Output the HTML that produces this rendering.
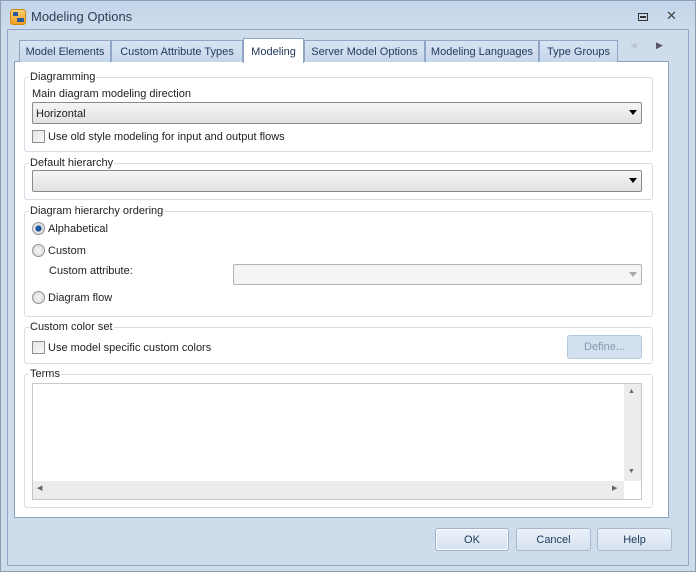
<!DOCTYPE html>
<html><head><style>
*{box-sizing:border-box;margin:0;padding:0}
body{width:696px;height:572px;position:relative;overflow:hidden;background:#cfdcec;font-family:"Liberation Sans",sans-serif;font-size:11px;color:#1e1e1e}
.a{position:absolute}
.win{left:0;top:0;width:696px;height:572px;border:1px solid #8f9cae;background:linear-gradient(#c3d5ea 0,#cfdcec 30px)}
.frame{left:7px;top:29px;width:682px;height:537px;border:1px solid #8fa6c4;background:#cfdcec}
.tab{top:40px;height:22px;border:1px solid #8fa6c4;border-bottom:none;background:linear-gradient(#d8e4f2,#c6d6ea);text-align:center;line-height:20px;color:#1e395b;padding-top:1px}
.tab.on{top:38px;height:25px;background:#fff;z-index:3;line-height:24px}
.panel{left:14px;top:61px;width:655px;height:457px;background:#fff;border:1px solid #8da2c0}
.grp{left:24px;width:629px;border:1px solid #d6dee8;border-radius:3px}
.lg{background:#fff;padding:0 1px;left:29px}
.combo{border:1px solid #8a8a8a;border-radius:2px;background:linear-gradient(#f6f6f6,#e2e2e2)}
.arr{position:absolute;right:4px;top:7px;width:0;height:0;border-left:4px solid transparent;border-right:4px solid transparent;border-top:5px solid #000}
.cb{width:13px;height:13px;border:1px solid #8e8f8f;background:linear-gradient(135deg,#e4e4e4,#fafafa)}
.rd{width:13px;height:13px;border-radius:50%;border:1px solid #939393;background:radial-gradient(#f4f4f4,#d8d8d8)}
.btn{top:528px;height:23px;border:1px solid #a8b8cc;border-radius:3px;background:linear-gradient(#eaf1fa,#d6e2f0);text-align:center;line-height:22px;color:#1e395b}
.t{margin-top:1px}
</style></head><body>
<div class="a win"></div>
<div class="a" style="left:10px;top:9px;width:16px;height:16px;border-radius:3px;background:linear-gradient(#ffd070,#f0a020);border:1px solid #d08a10"></div>
<div class="a" style="left:13px;top:12px;width:5px;height:4px;background:#2a5a9a"></div>
<div class="a" style="left:17px;top:18px;width:7px;height:4px;background:#2a5a9a"></div>
<div class="a" style="left:31px;top:9px;font-size:13px;color:#2c3e56">Modeling Options</div>
<div class="a" style="left:638px;top:13px;width:10px;height:8px;border:1px solid #333"></div>
<div class="a" style="left:640px;top:16px;width:6px;height:2px;background:#333"></div>
<div class="a" style="left:666px;top:8px;font-size:13px;color:#444">✕</div>
<div class="a frame"></div>
<div class="a panel"></div>
<div class="a tab" style="left:19px;width:92px">Model Elements</div>
<div class="a tab" style="left:111px;width:132px">Custom Attribute Types</div>
<div class="a tab on" style="left:243px;width:61px">Modeling</div>
<div class="a tab" style="left:304px;width:121px">Server Model Options</div>
<div class="a tab" style="left:425px;width:114px">Modeling Languages</div>
<div class="a tab" style="left:539px;width:79px">Type Groups</div>
<div class="a" style="left:630px;top:40px;color:#c0c8d4;font-size:9px">◀</div>
<div class="a" style="left:656px;top:40px;color:#556;font-size:9px">▶</div>

<div class="a grp" style="top:77px;height:75px"></div>
<div class="a lg" style="top:71px">Diagramming</div>
<div class="a" style="left:32px;top:88px">Main diagram modeling direction</div>
<div class="a combo" style="left:32px;top:102px;width:610px;height:22px"><span style="position:absolute;left:3px;top:5px">Horizontal</span><div class="arr"></div></div>
<div class="a cb" style="left:32px;top:130px"></div>
<div class="a" style="left:48px;top:131px">Use old style modeling for input and output flows</div>

<div class="a grp" style="top:163px;height:37px"></div>
<div class="a lg" style="top:157px">Default hierarchy</div>
<div class="a combo" style="left:32px;top:170px;width:610px;height:22px"><div class="arr"></div></div>

<div class="a grp" style="top:211px;height:106px"></div>
<div class="a lg" style="top:205px">Diagram hierarchy ordering</div>
<div class="a rd" style="left:32px;top:222px;background:radial-gradient(#1b6fc0 0,#0b4a90 2.5px,#e6e6e6 3.5px,#d6d6d6)"></div>
<div class="a" style="left:48px;top:223px">Alphabetical</div>
<div class="a rd" style="left:32px;top:244px"></div>
<div class="a" style="left:48px;top:245px">Custom</div>
<div class="a" style="left:49px;top:265px">Custom attribute:</div>
<div class="a" style="left:233px;top:264px;width:409px;height:21px;border:1px solid #b4b4b4;border-radius:2px;background:#f4f4f4"><div class="arr" style="border-top-color:#aaa"></div></div>
<div class="a rd" style="left:32px;top:291px"></div>
<div class="a" style="left:48px;top:292px">Diagram flow</div>

<div class="a grp" style="top:327px;height:37px"></div>
<div class="a lg" style="top:321px">Custom color set</div>
<div class="a cb" style="left:32px;top:341px"></div>
<div class="a" style="left:48px;top:342px">Use model specific custom colors</div>
<div class="a" style="left:567px;top:335px;width:75px;height:24px;border:1px solid #b8c8dc;border-radius:3px;background:#d2e0f0;color:#8a98aa;text-align:center;line-height:23px">Define...</div>

<div class="a grp" style="top:374px;height:134px"></div>
<div class="a lg" style="top:368px">Terms</div>
<div class="a" style="left:32px;top:383px;width:610px;height:117px;border:1px solid #c8c8c8;background:#fff"></div>
<div class="a" style="left:624px;top:384px;width:17px;height:97px;background:#ececec"></div>
<div class="a" style="left:628px;top:388px;font-size:7px;color:#666">▲</div>
<div class="a" style="left:628px;top:468px;font-size:7px;color:#666">▼</div>
<div class="a" style="left:33px;top:481px;width:591px;height:18px;background:#ececec"></div>
<div class="a" style="left:37px;top:484px;font-size:7px;color:#666">◀</div>
<div class="a" style="left:612px;top:484px;font-size:7px;color:#666">▶</div>

<div class="a btn" style="left:435px;width:74px;border-color:#9fb2ca;box-shadow:inset 0 0 0 1px #fff">OK</div>
<div class="a btn" style="left:516px;width:75px">Cancel</div>
<div class="a btn" style="left:597px;width:75px">Help</div>
</body></html>
